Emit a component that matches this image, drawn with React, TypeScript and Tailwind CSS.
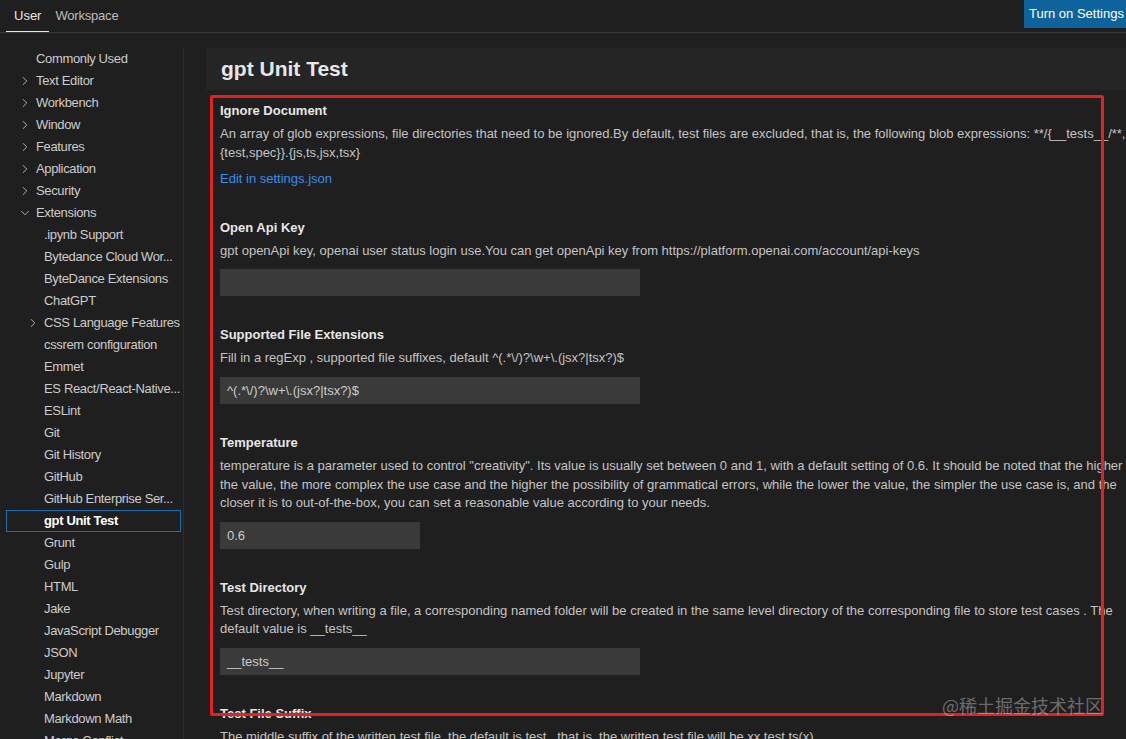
import { ChevronRight, ChevronDown } from "lucide-react";

type NavItem = {
  label: string;
  level: 0 | 1;
  chevron?: "right" | "down";
  selected?: boolean;
};

const nav: NavItem[] = [
  { label: "Commonly Used", level: 0 },
  { label: "Text Editor", level: 0, chevron: "right" },
  { label: "Workbench", level: 0, chevron: "right" },
  { label: "Window", level: 0, chevron: "right" },
  { label: "Features", level: 0, chevron: "right" },
  { label: "Application", level: 0, chevron: "right" },
  { label: "Security", level: 0, chevron: "right" },
  { label: "Extensions", level: 0, chevron: "down" },
  { label: ".ipynb Support", level: 1 },
  { label: "Bytedance Cloud Wor...", level: 1 },
  { label: "ByteDance Extensions", level: 1 },
  { label: "ChatGPT", level: 1 },
  { label: "CSS Language Features", level: 1, chevron: "right" },
  { label: "cssrem configuration", level: 1 },
  { label: "Emmet", level: 1 },
  { label: "ES React/React-Native...", level: 1 },
  { label: "ESLint", level: 1 },
  { label: "Git", level: 1 },
  { label: "Git History", level: 1 },
  { label: "GitHub", level: 1 },
  { label: "GitHub Enterprise Ser...", level: 1 },
  { label: "gpt Unit Test", level: 1, selected: true },
  { label: "Grunt", level: 1 },
  { label: "Gulp", level: 1 },
  { label: "HTML", level: 1 },
  { label: "Jake", level: 1 },
  { label: "JavaScript Debugger", level: 1 },
  { label: "JSON", level: 1 },
  { label: "Jupyter", level: 1 },
  { label: "Markdown", level: 1 },
  { label: "Markdown Math", level: 1 },
  { label: "Merge Conflict", level: 1 },
];

function NavRow({ item }: { item: NavItem }) {
  return (
    <div
      className={`flex items-center h-[22px] ml-[6px] mr-[2px] border whitespace-nowrap ${
        item.level === 0 ? "pl-[11px]" : "pl-[19px]"
      } ${
        item.selected
          ? "border-[#1b6fb0] font-bold text-white"
          : "border-transparent text-[#cccccc]"
      }`}
    >
      <span className="w-[18px] shrink-0 flex items-center text-[#c5c5c5]">
        {item.chevron === "right" && <ChevronRight size={14} strokeWidth={1.5} />}
        {item.chevron === "down" && <ChevronDown size={14} strokeWidth={1.5} />}
      </span>
      <span className="tracking-[-0.35px]">{item.label}</span>
    </div>
  );
}

type SettingProps = {
  title: string;
  lines: string[];
  link?: string;
  value?: string;
  inputWidth?: "wide" | "narrow";
};

function Setting({ title, lines, link, value, inputWidth }: SettingProps) {
  return (
    <div className="pb-[30px]">
      <div className="leading-[18px] font-semibold text-[#e7e7e7]">{title}</div>
      <div className="mt-[5px] leading-[18.6px] text-[#c4c4c4] whitespace-nowrap">
        {lines.map((l) => (
          <div key={l}>{l}</div>
        ))}
      </div>
      {link && (
        <div className="mt-[8px] leading-[18.6px] text-[#3b8eea]">{link}</div>
      )}
      {inputWidth && (
        <div
          className={`mt-[9px] h-[27px] bg-[#3a3a3a] pl-[7px] flex items-center text-[#cccccc] whitespace-nowrap ${
            inputWidth === "wide" ? "w-[420px]" : "w-[200px]"
          }`}
        >
          {value}
        </div>
      )}
    </div>
  );
}

export default function App() {
  return (
    <div className="relative w-[1126px] h-[739px] overflow-hidden bg-[#1f1f1f] text-[13px] text-[#cccccc] font-['Segoe_UI','Liberation_Sans',sans-serif]">
      {/* tabs */}
      <div className="flex h-[33px] border-b border-[#3c3c3c]">
        <div className="flex ml-[6px]">
          <div className="flex items-center px-[8px] border-b border-[#e7e7e7] text-[#e7e7e7]">
            User
          </div>
          <div className="flex items-center px-[6px] text-[#bdbdbd] tracking-[-0.2px]">
            Workspace
          </div>
        </div>
        <div className="ml-auto w-[102px] h-[28px] bg-[#0e639c] text-white pl-[5px] flex items-center whitespace-nowrap overflow-hidden">
          Turn on Settings Sync
        </div>
      </div>

      <div className="flex pt-[15px]">
        <div className="w-[184px] shrink-0 border-r border-[#2e2e2e] h-[700px]">
          {nav.map((n) => (
            <NavRow key={n.label} item={n} />
          ))}
        </div>

        <main className="flex-1 min-w-0 pl-[22px] overflow-hidden">
          <div className="h-[42px] bg-[#252526] flex items-center pl-[15px]">
            <h1 className="text-[21px] font-semibold text-[#e7e7e7]">gpt Unit Test</h1>
          </div>
          <div className="pl-[14px] pt-[12px]">
            <Setting
              title="Ignore Document"
              lines={[
                "An array of glob expressions, file directories that need to be ignored.By default, test files are excluded, that is, the following blob expressions: **/{__tests__/**,*.",
                "{test,spec}}.{js,ts,jsx,tsx}",
              ]}
              link="Edit in settings.json"
            />
            <Setting
              title="Open Api Key"
              lines={[
                "gpt openApi key, openai user status login use.You can get openApi key from https://platform.openai.com/account/api-keys",
              ]}
              value=""
              inputWidth="wide"
            />
            <Setting
              title="Supported File Extensions"
              lines={[
                "Fill in a regExp , supported file suffixes, default ^(.*\\/)?\\w+\\.(jsx?|tsx?)$",
              ]}
              value={"^(.*\\/)?\\w+\\.(jsx?|tsx?)$"}
              inputWidth="wide"
            />
            <Setting
              title="Temperature"
              lines={[
                'temperature is a parameter used to control "creativity". Its value is usually set between 0 and 1, with a default setting of 0.6. It should be noted that the higher',
                "the value, the more complex the use case and the higher the possibility of grammatical errors, while the lower the value, the simpler the use case is, and the",
                "closer it is to out-of-the-box, you can set a reasonable value according to your needs.",
              ]}
              value="0.6"
              inputWidth="narrow"
            />
            <Setting
              title="Test Directory"
              lines={[
                "Test directory, when writing a file, a corresponding named folder will be created in the same level directory of the corresponding file to store test cases . The",
                "default value is __tests__",
              ]}
              value="__tests__"
              inputWidth="wide"
            />
            <Setting
              title="Test File Suffix"
              lines={[
                "The middle suffix of the written test file, the default is test , that is, the written test file will be xx.test.ts(x)",
              ]}
            />
          </div>
        </main>
      </div>

      {/* annotation overlay */}
      <div className="absolute left-[210px] top-[95px] w-[894px] h-[621px] border-[3px] border-[#e62020] rounded-[2px] pointer-events-none" />
      <div className="absolute left-[942px] top-[694px] text-[18px] leading-[22px] text-white/35 font-['Noto_Sans_CJK_SC',sans-serif] whitespace-nowrap">
        @稀土掘金技术社区
      </div>
    </div>
  );
}
